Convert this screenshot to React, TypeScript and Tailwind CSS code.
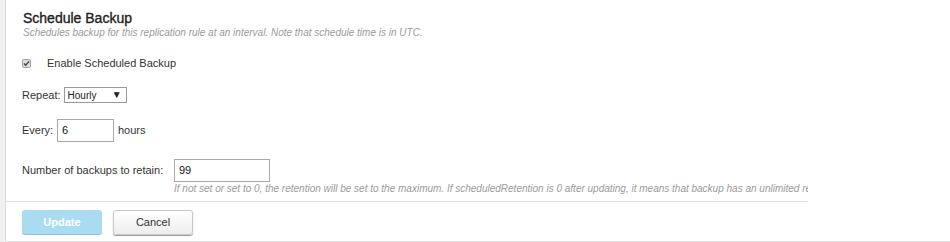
import React from "react";

function MiniCheck() {
  return (
    <svg width="9" height="9" viewBox="0 0 9 9" className="shrink-0">
      <rect x="0.5" y="0.5" width="8" height="8" rx="1" fill="#dcdcdc" stroke="#a0a0a0" />
      <path d="M2 4.6 L3.7 6.3 L7 2.4" fill="none" stroke="#444" strokeWidth="1.4" />
    </svg>
  );
}

export default function App() {
  return (
    <div className="flex h-[242px] w-[950px] bg-white font-['Liberation_Sans',Arial,sans-serif] text-[#333]">
      {/* left gutter */}
      <div className="w-[6px] shrink-0 border-r border-[#dedede] bg-[#f0f0f0]" />

      <div className="flex min-w-0 flex-1 flex-col">
        {/* form body */}
        <div className="h-[202px] w-[802px] overflow-hidden border-b border-[#e3e3e3] pl-[16px] pt-[10px]">
          <h2 className="pl-[1px] text-[14px] leading-[16px] text-[#222] [-webkit-text-stroke:0.35px_#222]">Schedule Backup</h2>
          <p className="mt-[1px] pl-[1px] text-[10px] italic leading-[12px] text-[#9a9a9a]">
            Schedules backup for this replication rule at an interval. Note that schedule time is in UTC.
          </p>

          <div className="mt-[18px] flex h-[13px] items-center gap-[16px]">
            <MiniCheck />
            <span className="text-[11px] leading-[13px]">Enable Scheduled Backup</span>
          </div>

          <div className="mt-[17px] flex h-[16px] items-center gap-[3px]">
            <span className="text-[11px]">Repeat:</span>
            <div className="flex h-[16px] w-[63px] items-center justify-between border border-[#9a9a9a] pl-[3px] pr-[4px]">
              <span className="pt-[1px] text-[10px] leading-[12px] text-[#222]">Hourly</span>
              <span className="text-[10px] leading-[10px] text-[#222]">▼</span>
            </div>
          </div>

          <div className="mt-[16px] flex h-[23px] items-center">
            <span className="w-[35px] text-[11px]">Every:</span>
            <div className="flex h-[23px] w-[57px] items-center border border-[#a8a8a8] pl-[4px] text-[11px] text-[#111]">6</div>
            <span className="ml-[4px] text-[11px]">hours</span>
          </div>

          <div className="mt-[17px] flex h-[23px] items-center">
            <span className="w-[152px] text-[11px]">Number of backups to retain:</span>
            <div className="flex h-[23px] w-[96px] items-center border border-[#a8a8a8] pl-[4px] text-[11px] text-[#111]">99</div>
          </div>
          <p className="ml-[152px] mt-[1px] whitespace-nowrap text-[10px] italic leading-[12px] text-[#9a9a9a]">
            If not set or set to 0, the retention will be set to the maximum. If scheduledRetention is 0 after updating, it means that backup has an unlimited retention.
          </p>
        </div>

        {/* footer */}
        <div className="flex h-[40px] gap-[11px] border-b border-[#e3e3e3] pl-[16px] pt-[8px]">
          <button className="h-[24px] w-[80px] rounded-[3px] bg-[#a9dcf1] text-[11px] font-bold text-white shadow-[0_1px_0_#8fc3da]">
            Update
          </button>
          <button className="h-[25px] w-[80px] rounded-[3px] border border-[#c8c8c8] bg-gradient-to-b from-white to-[#ededed] text-[11px] text-[#333] shadow-[0_1px_1px_#999]">
            Cancel
          </button>
        </div>
      </div>
    </div>
  );
}
